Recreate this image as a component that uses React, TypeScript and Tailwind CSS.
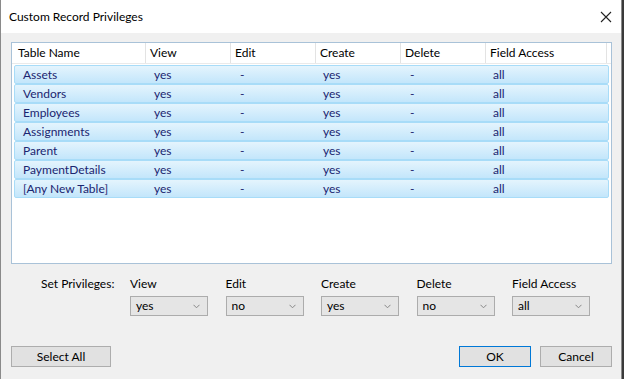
import React, { useState } from 'react';

type Row = {
  name: string;
  view: string;
  edit: string;
  create: string;
  del: string;
  access: string;
};

const rows: Row[] = [
  { name: 'Assets', view: 'yes', edit: '-', create: 'yes', del: '-', access: 'all' },
  { name: 'Vendors', view: 'yes', edit: '-', create: 'yes', del: '-', access: 'all' },
  { name: 'Employees', view: 'yes', edit: '-', create: 'yes', del: '-', access: 'all' },
  { name: 'Assignments', view: 'yes', edit: '-', create: 'yes', del: '-', access: 'all' },
  { name: 'Parent', view: 'yes', edit: '-', create: 'yes', del: '-', access: 'all' },
  { name: 'PaymentDetails', view: 'yes', edit: '-', create: 'yes', del: '-', access: 'all' },
  { name: '[Any New Table]', view: 'yes', edit: '-', create: 'yes', del: '-', access: 'all' },
];

const headers = ['Table Name', 'View', 'Edit', 'Create', 'Delete', 'Field Access'];

const privileges = [
  { label: 'View', value: 'yes' },
  { label: 'Edit', value: 'no' },
  { label: 'Create', value: 'yes' },
  { label: 'Delete', value: 'no' },
  { label: 'Field Access', value: 'all' },
];

const Chevron: React.FC = () => (
  <svg width="7" height="5" viewBox="0 0 7 5" className="text-[#888]">
    <path d="M0.5 0.8 L3.5 3.8 L6.5 0.8" fill="none" stroke="currentColor" strokeWidth="1" />
  </svg>
);

const App: React.FC = () => {
  const [selected] = useState(rows.map((r) => r.name));

  return (
    <div
      className="w-[624px] h-[379px] bg-[#3a3a3a] overflow-hidden"
      style={{ fontFamily: 'Lato, "Open Sans", sans-serif' }}
    >
      <div className="w-[622px] h-[379px] flex flex-col bg-[#f0f0f0] border-l border-r border-[#8a8a8a] text-[12px] text-black">
        {/* Title bar */}
        <div className="h-[33px] shrink-0 bg-white flex items-center justify-between pl-[8px] pr-[9px]">
          <span className="leading-none">Custom Record Privileges</span>
          <svg width="12" height="12" viewBox="0 0 12 12">
            <path d="M1 1 L11 11 M11 1 L1 11" stroke="#222" strokeWidth="1.1" />
          </svg>
        </div>

        {/* List */}
        <div className="mt-[9px] ml-[10px] w-[601px] h-[222px] bg-white border border-[#a9c2d8] flex flex-col">
          <div className="h-[21px] flex items-stretch pl-[2px] border-b border-[#eaeaea]">
            {headers.map((h, i) => (
              <div
                key={h}
                className={`flex items-center pl-[4px] border-r border-[#e3e3e3] ${i === 0 ? 'w-[132px]' : i === 5 ? 'w-[121px]' : 'w-[85px]'}`}
              >
                {h}
              </div>
            ))}
          </div>
          <div className="flex flex-col pl-[2px] pr-[2px] pt-[1px]">
            {rows.map((r) => (
              <div
                key={r.name}
                className={`h-[19px] flex items-center rounded-[2px] border border-[#a8dcf8] bg-gradient-to-b from-[#e4f4fd] to-[#c3e6fb] text-[#1b2570] ${selected.includes(r.name) ? '' : 'opacity-0'}`}
              >
                <div className="w-[132px] pl-[8px]">{r.name}</div>
                <div className="w-[85px] pl-[7px]">{r.view}</div>
                <div className="w-[85px] pl-[8px]">{r.edit}</div>
                <div className="w-[85px] pl-[6px]">{r.create}</div>
                <div className="w-[85px] pl-[8px]">{r.del}</div>
                <div className="w-[85px] pl-[6px]">{r.access}</div>
              </div>
            ))}
          </div>
        </div>

        {/* Set privileges */}
        <div className="flex items-start mt-[12px]">
          <div className="w-[129px] pl-[40px] leading-[16px] whitespace-nowrap">Set Privileges:</div>
          <div className="flex gap-[17.5px]">
            {privileges.map((p) => (
              <div key={p.label} className="flex flex-col w-[78px]">
                <span className="leading-[16px]">{p.label}</span>
                <div className="mt-[4px] h-[20px] bg-[#e5e5e5] border border-[#acacac] flex items-center justify-between pl-[5px] pr-[7px]">
                  <span>{p.value}</span>
                  <Chevron />
                </div>
              </div>
            ))}
          </div>
        </div>

        {/* Buttons */}
        <div className="flex items-center justify-between mt-[30px] pl-[10px] pr-[9px]">
          <button className="w-[100px] h-[21px] bg-[#e1e1e1] border border-[#adadad]">Select All</button>
          <div className="flex gap-[9px]">
            <button className="w-[72px] h-[21px] bg-[#e1e1e1] border border-[#0078d7]">OK</button>
            <button className="w-[72px] h-[21px] bg-[#e1e1e1] border border-[#adadad]">Cancel</button>
          </div>
        </div>
      </div>
    </div>
  );
};

export default App;
